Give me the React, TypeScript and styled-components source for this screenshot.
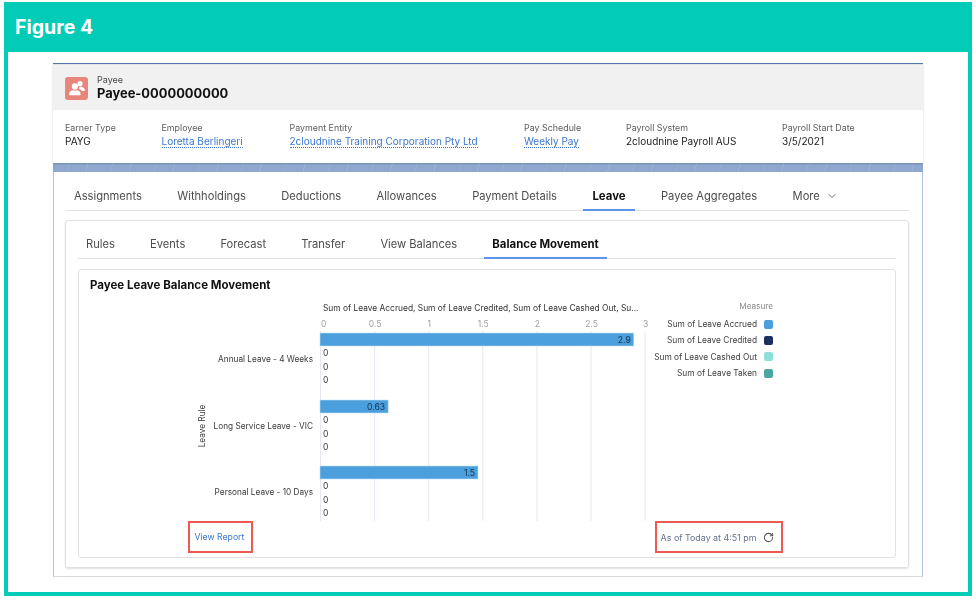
import { createGlobalStyle } from "styled-components";
import styled from "styled-components";
import { ChevronDown, RotateCw } from "lucide-react";

const GlobalStyle = createGlobalStyle`
  html, body {
    margin: 0;
    padding: 0;
    background: #fff;
    font-family: Inter, "Liberation Sans", sans-serif;
  }
`;

const Frame = styled.div`
  box-sizing: border-box;
  width: 968px;
  height: 594px;
  margin: 2px 0 0 4px;
  border: 4px solid #02ccb8;
  border-top: 0;
  display: flex;
  flex-direction: column;
`;

const FigureBar = styled.div`
  height: 50px;
  margin: 0 -4px;
  padding-left: 11px;
  background: #02ccb8;
  color: #fff;
  font-size: 19.5px;
  font-weight: 700;
  line-height: 50px;
`;

const Screen = styled.div`
  width: 870px;
  height: 514px;
  margin: 11px 0 0 45px;
  display: flex;
  flex-direction: column;
  background: repeating-linear-gradient(105deg, #8fa8d0 0 17px, #9cb3d6 17px 18px, #8fa8d0 18px 41px, #98afd4 41px 42px);
  border-top: 1px solid #5578ae;
  box-sizing: border-box;
  filter: blur(0.3px);
`;

const RecordCard = styled.div`
  background: #fff;
  height: 99px;
  flex: none;
  box-shadow: 0 1px 2px rgba(0, 0, 0, 0.18);
`;

const RecordHead = styled.div`
  height: 46px;
  background: #f1f1f1;
  border-top: 1px solid #e2e2e2;
  box-sizing: border-box;
  display: flex;
  align-items: center;
  gap: 9px;
  padding: 1px 0 0 12px;
`;

const RecordIcon = styled.div`
  width: 23px;
  height: 23px;
  border-radius: 3px;
  background: #e9867c;
  display: flex;
  align-items: center;
  justify-content: center;
`;

const RecordType = styled.div`
  font-size: 9px;
  line-height: 11px;
  color: #4a4a4a;
`;

const RecordName = styled.div`
  font-size: 12.9px;
  line-height: 18px;
  font-weight: 700;
  color: #111;
`;

const DetailGrid = styled.div`
  display: grid;
  grid-template-columns: 96.5px 128px 234.5px 102px 156px auto;
  padding: 12px 0 0 12px;
`;

const DetailLabel = styled.div`
  font-size: 8.9px;
  line-height: 12px;
  color: #5c5c5c;
`;

const DetailValue = styled.div`
  font-size: 10px;
  line-height: 14px;
  color: #1c1c1c;
`;

const DetailLink = styled.span`
  color: #3b77d0;
  border-bottom: 1px dotted #3b77d0;
`;

const Panel = styled.div`
  flex: 1;
  margin-top: 9px;
  background: #fff;
  border-left: 1px solid #b4c4de;
  border-right: 1px solid #b4c4de;
  border-bottom: 1px solid #d8dbe2;
  padding: 0 13px 0 11px;
  display: flex;
  flex-direction: column;
`;

const TabRow = styled.div<{ $height: number; $gap: number }>`
  display: flex;
  align-items: flex-end;
  gap: ${(p) => p.$gap}px;
  height: ${(p) => p.$height}px;
  flex: none;
  border-bottom: 1px solid #e2e2e2;
  box-sizing: border-box;
`;

const Tab = styled.div<{ $active?: boolean; $pad: number }>`
  box-sizing: border-box;
  height: 29px;
  display: flex;
  align-items: center;
  gap: 6px;
  padding: 0 ${(p) => p.$pad}px;
  margin-bottom: -1px;
  font-size: ${(p) => (p.$active ? 11.4 : 11.15)}px;
  font-weight: ${(p) => (p.$active ? 700 : 400)};
  color: ${(p) => (p.$active ? "#111" : "#4c4c4c")};
  border-bottom: 2px solid ${(p) => (p.$active ? "#5b93ee" : "transparent")};
  white-space: nowrap;
`;

const OuterCard = styled.div`
  margin-top: 9px;
  height: 348px;
  flex: none;
  box-sizing: border-box;
  border: 1px solid #e0e0e0;
  border-radius: 3px;
  box-shadow: 0 1px 2px rgba(0, 0, 0, 0.12);
  padding: 0 12px;
  display: flex;
  flex-direction: column;
`;

const ChartCard = styled.div`
  margin-top: 10px;
  height: 289px;
  box-sizing: border-box;
  border: 1px solid #e2e2e2;
  border-radius: 3px;
  display: flex;
  flex-direction: column;
`;

const ChartTitle = styled.div`
  box-sizing: border-box;
  padding: 8px 0 0 11px;
  height: 23px;
  flex: none;
  font-size: 11.5px;
  line-height: 15px;
  font-weight: 700;
  color: #111;
`;

const ChartBody = styled.div`
  display: flex;
  height: 221px;
  flex: none;
  margin-top: 7px;
`;

const Legend = styled.div`
  width: 123px;
  display: flex;
  flex-direction: column;
  align-items: flex-end;
`;

const LegendTitle = styled.div`
  font-size: 8.2px;
  line-height: 12px;
  color: #8a8a8a;
  margin-bottom: 4px;
`;

const LegendRow = styled.div`
  display: flex;
  align-items: center;
  gap: 7px;
  height: 16.3px;
  font-size: 8.35px;
  color: #3e3e3e;
  white-space: nowrap;
`;

const Swatch = styled.span<{ $color: string }>`
  width: 9px;
  height: 9px;
  border-radius: 2px;
  background: ${(p) => p.$color};
`;

const ChartFooter = styled.div`
  display: flex;
  justify-content: space-between;
  padding: 0 112px 0 109px;
`;

const Callout = styled.div`
  box-sizing: border-box;
  height: 32px;
  border: 2.5px solid #ee5a52;
  display: flex;
  align-items: center;
  gap: 6px;
  padding: 0 5.5px 0 4px;
  font-size: 8.7px;
`;

const ReportLink = styled.span`
  color: #3b77d0;
  padding: 0 1.5px 0 0.5px;
`;

const AsOf = styled.span`
  color: #66708f;
  font-size: 8.9px;
`;

const RefreshIcon = styled(RotateCw)`
  margin-right: 2px;
`;

const detailItems = [
  { label: "Earner Type", value: "PAYG" },
  { label: "Employee", value: "Loretta Berlingeri", link: true },
  { label: "Payment Entity", value: "2cloudnine Training Corporation Pty Ltd", link: true },
  { label: "Pay Schedule", value: "Weekly Pay", link: true },
  { label: "Payroll System", value: "2cloudnine Payroll AUS" },
  { label: "Payroll Start Date", value: "3/5/2021" },
];

const mainTabs = ["Assignments", "Withholdings", "Deductions", "Allowances", "Payment Details", "Leave", "Payee Aggregates"];
const subTabs = ["Rules", "Events", "Forecast", "Transfer", "View Balances", "Balance Movement"];

const legendItems = [
  { name: "Sum of Leave Accrued", color: "#4a9fdc" },
  { name: "Sum of Leave Credited", color: "#1c2f5e" },
  { name: "Sum of Leave Cashed Out", color: "#91dfd9" },
  { name: "Sum of Leave Taken", color: "#4aa6a0" },
];

const X0 = 241;
const UNIT = 108.2;
const ticks = ["0", "0.5", "1", "1.5", "2", "2.5", "3"];
const groups = [
  { label: "Annual Leave - 4 Weeks", value: 2.9, text: "2.9", top: 33 },
  { label: "Long Service Leave - VIC", value: 0.63, text: "0.63", top: 100 },
  { label: "Personal Leave - 10 Days", value: 1.46, text: "1.5", top: 166 },
];

const PayeeIcon = () => (
  <svg width="18" height="18" viewBox="0 0 17 17" fill="#fff">
    <circle cx="6.5" cy="7" r="2.9" />
    <path d="M1 14.6c0-2.4 1.6-3.4 3.4-3.9.9.6 3.2.6 4.2 0 1.8.5 3.4 1.5 3.4 3.9 0 .5-.3.8-.8.8H1.8c-.5 0-.8-.3-.8-.8z" />
    <circle cx="11.4" cy="4.4" r="2.4" />
    <path d="M10.4 9.4c.5-.9.4-1.4.3-2 .5.2 1.1.2 1.6 0 1.7.4 3.7 1.2 3.7 3.2 0 .4-.3.7-.7.7h-2.2c-.6-.8-1.6-1.5-2.7-1.9z" />
  </svg>
);

const LeaveChart = () => (
  <svg width="571" height="221" viewBox="0 0 571 221" fontFamily="Inter, sans-serif">
    <text x="244" y="11" fontSize="8.4" fill="#333">
      Sum of Leave Accrued, Sum of Leave Credited, Sum of Leave Cashed Out, Su...
    </text>
    {ticks.map((t, i) => {
      const x = X0 + (i * UNIT) / 2;
      return (
        <g key={t}>
          <line x1={x + 0.5} x2={x + 0.5} y1="31" y2="221" stroke="#e6e9f3" />
          <text x={x + 1} y="27" fontSize="8.5" fill="#a0a0a0" textAnchor={i === 0 ? "start" : "middle"}>
            {t}
          </text>
        </g>
      );
    })}
    {groups.map((g) => (
      <g key={g.label}>
        <text x="234" y={g.top + 29} fontSize="8.25" fill="#3a3a3a" textAnchor="end">
          {g.label}
        </text>
        <rect x={X0} y={g.top} width={g.value * UNIT} height="13" fill="#4a9fdc" stroke="#bfe0f5" strokeWidth="0.6" />
        <text x={X0 + g.value * UNIT - 3} y={g.top + 10} fontSize="8.6" fill="#16324f" textAnchor="end">
          {g.text}
        </text>
        {[23, 36.5, 50].map((dy) => (
          <text key={dy} x={X0 + 3} y={g.top + dy} fontSize="8.6" fill="#3a3a3a">
            0
          </text>
        ))}
      </g>
    ))}
    <text transform="translate(126 126) rotate(-90)" fontSize="8.25" fill="#3a3a3a" textAnchor="middle">
      Leave Rule
    </text>
  </svg>
);

export default function App() {
  return (
    <>
      <GlobalStyle />
      <Frame>
        <FigureBar>Figure 4</FigureBar>
        <Screen>
          <RecordCard>
            <RecordHead>
              <RecordIcon>
                <PayeeIcon />
              </RecordIcon>
              <div>
                <RecordType>Payee</RecordType>
                <RecordName>Payee-0000000000</RecordName>
              </div>
            </RecordHead>
            <DetailGrid>
              {detailItems.map((d) => (
                <div key={d.label}>
                  <DetailLabel>{d.label}</DetailLabel>
                  <DetailValue>{d.link ? <DetailLink>{d.value}</DetailLink> : d.value}</DetailValue>
                </div>
              ))}
            </DetailGrid>
          </RecordCard>
          <Panel>
            <TabRow $height={39} $gap={17.4}>
              {mainTabs.map((t) => (
                <Tab key={t} $pad={9} $active={t === "Leave"}>
                  {t}
                </Tab>
              ))}
              <Tab $pad={9}>
                More
                <ChevronDown size={12} strokeWidth={1.6} />
              </Tab>
            </TabRow>
            <OuterCard>
              <TabRow $height={38} $gap={19.2}>
                {subTabs.map((t) => (
                  <Tab key={t} $pad={8} $active={t === "Balance Movement"}>
                    {t}
                  </Tab>
                ))}
              </TabRow>
              <ChartCard>
                <ChartTitle>Payee Leave Balance Movement</ChartTitle>
                <ChartBody>
                  <LeaveChart />
                  <Legend>
                    <LegendTitle>Measure</LegendTitle>
                    {legendItems.map((l) => (
                      <LegendRow key={l.name}>
                        {l.name}
                        <Swatch $color={l.color} />
                      </LegendRow>
                    ))}
                  </Legend>
                </ChartBody>
                <ChartFooter>
                  <Callout>
                    <ReportLink>View Report</ReportLink>
                  </Callout>
                  <Callout>
                    <AsOf>As of Today at 4:51 pm</AsOf>
                    <RefreshIcon size={11} strokeWidth={2.2} color="#555" />
                  </Callout>
                </ChartFooter>
              </ChartCard>
            </OuterCard>
          </Panel>
        </Screen>
      </Frame>
    </>
  );
}
